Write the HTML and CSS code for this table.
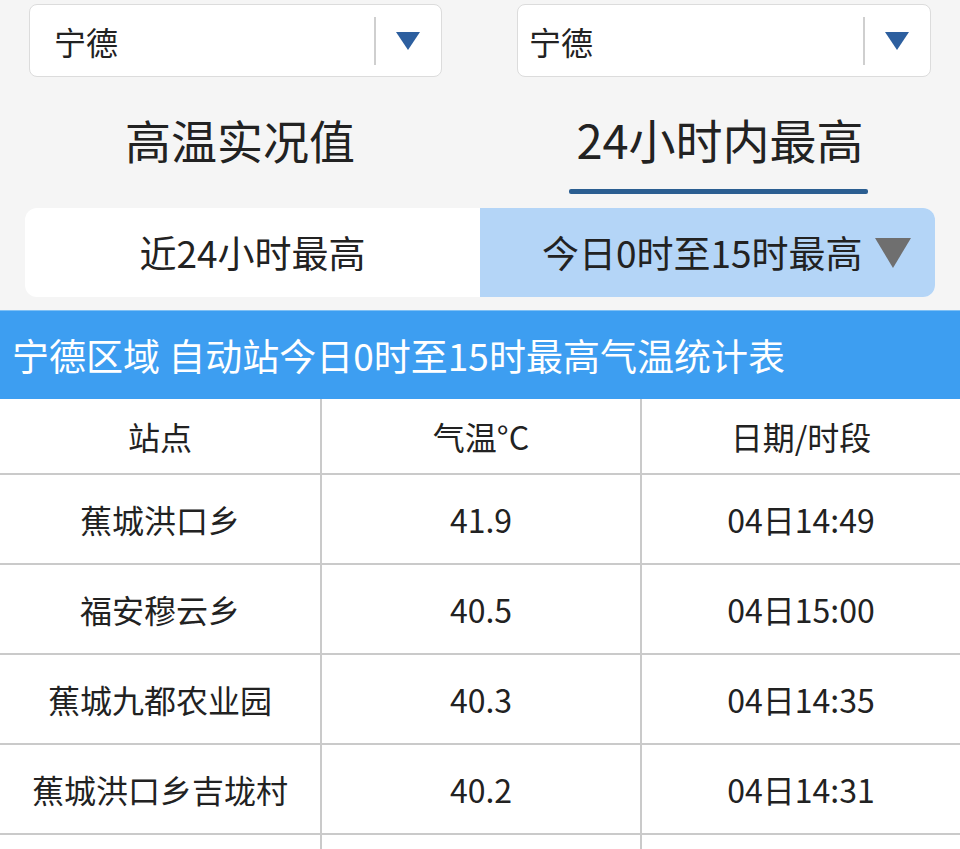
FILE: index.html
```html
<!DOCTYPE html>
<html lang="zh-CN">
<head>
<meta charset="utf-8">
<title>宁德 高温实况</title>
<link rel="stylesheet" href="styles.css">
</head>
<body>
<div class="page">
  <div class="selects">
    <div class="select select-left">
      <span class="select-text">宁德</span>
      <span class="select-divider"></span>
      <svg class="select-arrow" viewBox="0 0 24 18" width="24" height="18"><polygon points="0,0 24,0 12,18" fill="#2d5f9f"/></svg>
    </div>
    <div class="select select-right">
      <span class="select-text">宁德</span>
      <span class="select-divider"></span>
      <svg class="select-arrow" viewBox="0 0 24 18" width="24" height="18"><polygon points="0,0 24,0 12,18" fill="#2d5f9f"/></svg>
    </div>
  </div>

  <div class="tabs">
    <div class="tab">高温实况值</div>
    <div class="tab tab-active"><span class="tab-label">24小时内最高</span></div>
  </div>

  <div class="subtabs">
    <div class="subtab">近24小时最高</div>
    <div class="subtab subtab-active">今日0时至15时最高<svg class="subtab-arrow" viewBox="0 0 36 30" width="36" height="30"><polygon points="0,0 36,0 18,30" fill="#6f6f6f"/></svg></div>
  </div>

  <div class="bar">宁德区域 自动站今日0时至15时最高气温统计表</div>

  <div class="table">
    <div class="row row-head">
      <div class="cell">站点</div>
      <div class="cell">气温°C</div>
      <div class="cell">日期/时段</div>
    </div>
    <div class="row">
      <div class="cell">蕉城洪口乡</div>
      <div class="cell">41.9</div>
      <div class="cell">04日14:49</div>
    </div>
    <div class="row">
      <div class="cell">福安穆云乡</div>
      <div class="cell">40.5</div>
      <div class="cell">04日15:00</div>
    </div>
    <div class="row">
      <div class="cell">蕉城九都农业园</div>
      <div class="cell">40.3</div>
      <div class="cell">04日14:35</div>
    </div>
    <div class="row">
      <div class="cell">蕉城洪口乡吉垅村</div>
      <div class="cell">40.2</div>
      <div class="cell">04日14:31</div>
    </div>
    <div class="row row-last">
      <div class="cell">&nbsp;</div>
      <div class="cell">&nbsp;</div>
      <div class="cell">&nbsp;</div>
    </div>
  </div>
</div>
</body>
</html>
```

FILE: styles.css
```css
* { box-sizing: border-box; }
html, body { margin: 0; padding: 0; }
body {
  background: #f5f5f5;
  font-family: "Noto Sans CJK SC", "Noto Sans", sans-serif;
  color: #222;
  width: 960px;
  height: 849px;
  overflow: hidden;
}
.page { width: 960px; height: 849px; overflow: hidden; }

.selects {
  display: flex;
  justify-content: space-between;
  padding: 4px 29px 0 29px;
}
.select {
  width: 414px;
  height: 73px;
  background: #fff;
  border: 1px solid #dcdcdc;
  border-radius: 8px;
  display: flex;
  align-items: center;
  padding-right: 21px;
}
.select-left { padding-left: 24px; width: 413px; }
.select-right { padding-left: 11px; }
.select-text {
  flex: 1;
  font-size: 32px;
  line-height: 1;
  color: #222;
}
.select-divider {
  width: 2px;
  height: 48px;
  background: #cfcfcf;
  margin-right: 20px;
}
.select-arrow { display: block; }

.tabs {
  display: flex;
  height: 131px;
}
.tab {
  flex: 1;
  display: flex;
  align-items: center;
  justify-content: center;
  font-size: 46px;
  padding-bottom: 8px;
}
.tab-active { position: relative; font-size: 47px; }
.tab-label {
  display: inline-block;
  position: relative;
}
.tab-active::after {
  content: "";
  position: absolute;
  left: 89px;
  width: 299px;
  bottom: 14px;
  height: 5px;
  border-radius: 2px;
  background: #2b5e91;
}

.subtabs {
  margin: 0 25px;
  height: 89px;
  border-radius: 12px;
  overflow: hidden;
  display: flex;
  background: #fff;
}
.subtab {
  flex: 0 0 50%;
  min-width: 0;
  display: flex;
  align-items: center;
  justify-content: center;
  font-size: 37px;
  padding-bottom: 2px;
  white-space: nowrap;
}
.subtab-active {
  background: #b4d5f7;
  justify-content: flex-start;
  padding-left: 62px;
}
.subtab-arrow {
  display: block;
  margin-left: 12px;
  margin-top: 2px;
}

.bar {
  margin-top: 13px;
  height: 89px;
  background: #3d9ef1;
  border-top: 1px solid #7fc0f5;
  color: #fff;
  font-size: 37px;
  display: flex;
  align-items: center;
  padding-left: 12px;
  white-space: nowrap;
}

.table { background: #fff; }
.row {
  display: grid;
  grid-template-columns: 322px 320px 1fr;
  height: 90px;
  border-bottom: 2px solid #cacaca;
}
.row-head { height: 76px; }
.row-last { height: 40px; border-bottom: none; }
.cell {
  display: flex;
  align-items: center;
  justify-content: center;
  font-size: 32px;
  color: #222;
  white-space: nowrap;
}
.cell:nth-child(1), .cell:nth-child(2) { border-right: 2px solid #cacaca; }
```
